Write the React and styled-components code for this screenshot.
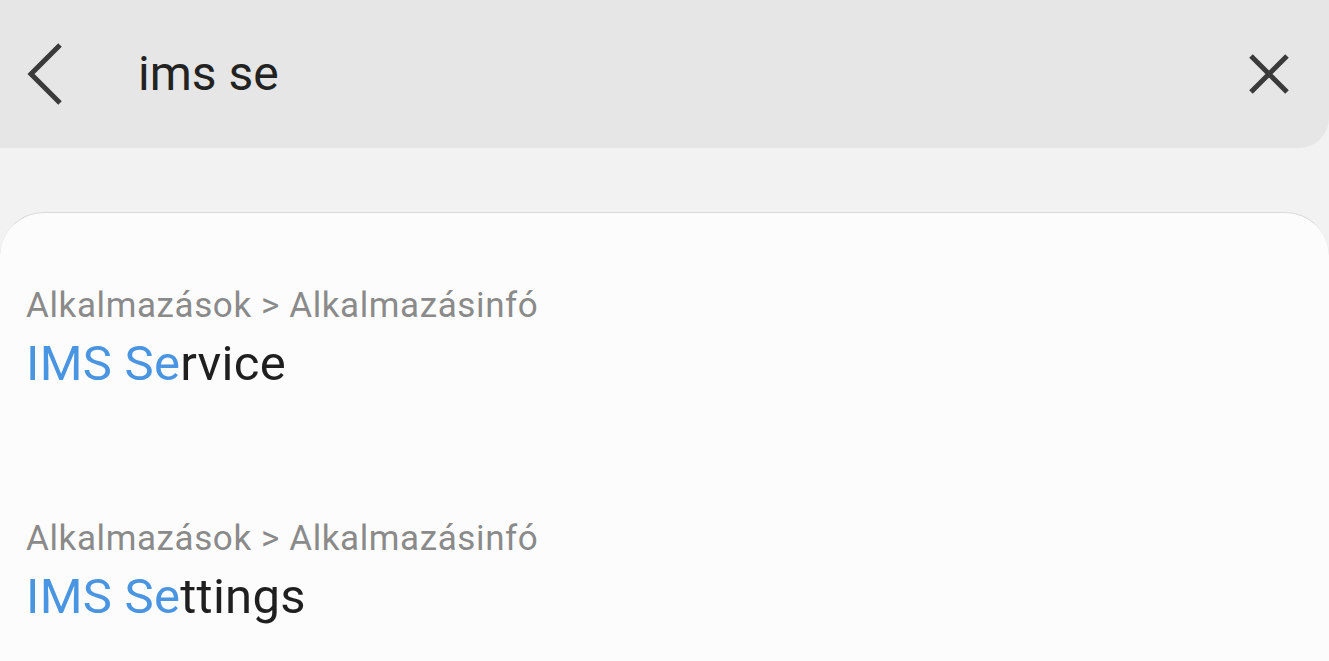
import styled, { createGlobalStyle } from 'styled-components';

const GlobalStyle = createGlobalStyle`
  html, body {
    margin: 0;
    padding: 0;
    background: #f2f2f2;
    font-family: Roboto, 'Noto Sans', sans-serif;
    overflow: hidden;
  }
`;

const results = [
  { path: 'Alkalmazások > Alkalmazásinfó', match: 'IMS Se', rest: 'rvice' },
  { path: 'Alkalmazások > Alkalmazásinfó', match: 'IMS Se', rest: 'ttings' }
];

export default function App() {
  return (
    <Page>
      <GlobalStyle />
      <SearchBar>
        <IconButton aria-label="Vissza">
          <svg width="40" height="64" viewBox="0 0 40 64">
            <path d="M35 3 L6 32 L35 61" fill="none" stroke="#3a3a3a" strokeWidth="5" />
          </svg>
        </IconButton>
        <Query>ims se</Query>
        <ClearButton aria-label="Törlés">
          <svg width="44" height="44" viewBox="0 0 44 44">
            <path d="M4 4 L40 40 M40 4 L4 40" fill="none" stroke="#3a3a3a" strokeWidth="5" />
          </svg>
        </ClearButton>
      </SearchBar>
      <Card>
        {results.map((r, i) => (
          <Result key={i}>
            <Path>{r.path}</Path>
            <Title>
              <Hit>{r.match}</Hit>
              {r.rest}
            </Title>
          </Result>
        ))}
      </Card>
    </Page>
  );
}

const Page = styled.div`
  width: 1329px;
  height: 661px;
  display: flex;
  flex-direction: column;
  background: #f2f2f2;
`;

const SearchBar = styled.div`
  height: 148px;
  background: #e6e6e6;
  border-bottom-right-radius: 30px;
  display: flex;
  align-items: center;
  padding: 0 38px 4px 25px;
  box-sizing: border-box;
  flex-shrink: 0;
`;

const IconButton = styled.div`
  width: 40px;
  height: 64px;
  display: flex;
  align-items: center;
  justify-content: center;
  margin-top: 4px;
`;

const ClearButton = styled(IconButton)`
  width: 44px;
  height: 44px;
`;

const Query = styled.div`
  flex: 1;
  margin-left: 73px;
  margin-top: 3px;
  font-size: 48px;
  color: #222;
  line-height: 1;
`;

const Card = styled.div`
  margin-top: 64px;
  flex: 1;
  background: #fcfcfc;
  border-top: 1px solid #d9d9d9;
  border-top-left-radius: 44px;
  border-top-right-radius: 44px;
  padding: 71px 26px 0;
  display: flex;
  flex-direction: column;
  gap: 118px;
`;

const Result = styled.div`
  display: flex;
  flex-direction: column;
`;

const Path = styled.div`
  font-size: 35px;
  letter-spacing: 0.6px;
  color: #8a8a8a;
  line-height: 44px;
  white-space: nowrap;
`;

const Title = styled.div`
  font-size: 49px;
  letter-spacing: 0.3px;
  color: #1f1f1f;
  line-height: 71px;
  white-space: nowrap;
`;

const Hit = styled.span`
  color: #4a95e2;
`;
